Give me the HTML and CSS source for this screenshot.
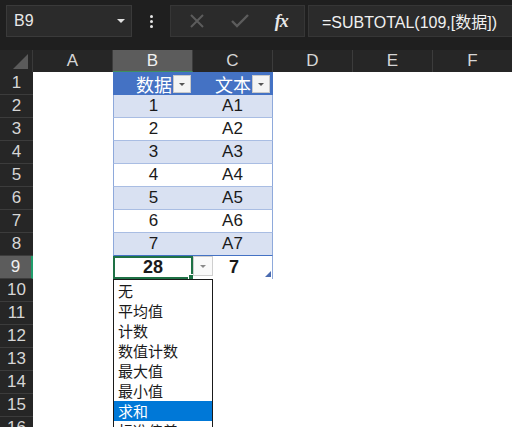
FILE: index.html
```html
<!DOCTYPE html>
<html>
<head>
<meta charset="utf-8">
<link rel="stylesheet" href="styles.css">
</head>
<body>
<div class="toolbar">
  <div class="namebox"><span class="nb-text">B9</span><span class="nb-arrow"></span></div>
  <div class="dots"><i></i><i></i><i></i></div>
  <div class="fxbox">
    <svg class="ic" width="16" height="16" viewBox="0 0 16 16"><path d="M2 2L14 14M14 2L2 14" stroke="#5c5c5c" stroke-width="2" fill="none"/></svg>
    <svg class="ic" width="20" height="16" viewBox="0 0 20 16"><path d="M2 8L7 13L18 2" stroke="#5c5c5c" stroke-width="2.4" fill="none"/></svg>
    <span class="fx">fx</span>
  </div>
  <div class="formula">=SUBTOTAL(109,[数据])</div>
</div>
<div class="sheet">
  <div class="corner"><span class="tri"></span></div>
  <div class="ch">A</div><div class="ch sel">B</div><div class="ch">C</div><div class="ch">D</div><div class="ch">E</div><div class="ch">F</div>

  <div class="rh">1</div><div class="c"></div>
  <div class="c hd tb"><span>数据</span><span class="fb"></span></div>
  <div class="c hd tc"><span>文本</span><span class="fb"></span></div>
  <div class="c"></div><div class="c"></div><div class="c"></div>

  <div class="rh">2</div><div class="c"></div><div class="c bl tb">1</div><div class="c bl tc">A1</div><div class="c"></div><div class="c"></div><div class="c"></div>
  <div class="rh">3</div><div class="c"></div><div class="c wh tb">2</div><div class="c wh tc">A2</div><div class="c"></div><div class="c"></div><div class="c"></div>
  <div class="rh">4</div><div class="c"></div><div class="c bl tb">3</div><div class="c bl tc">A3</div><div class="c"></div><div class="c"></div><div class="c"></div>
  <div class="rh">5</div><div class="c"></div><div class="c wh tb">4</div><div class="c wh tc">A4</div><div class="c"></div><div class="c"></div><div class="c"></div>
  <div class="rh">6</div><div class="c"></div><div class="c bl tb">5</div><div class="c bl tc">A5</div><div class="c"></div><div class="c"></div><div class="c"></div>
  <div class="rh">7</div><div class="c"></div><div class="c wh tb">6</div><div class="c wh tc">A6</div><div class="c"></div><div class="c"></div><div class="c"></div>
  <div class="rh">8</div><div class="c"></div><div class="c bl tb last">7</div><div class="c bl tc last">A7</div><div class="c"></div><div class="c"></div><div class="c"></div>

  <div class="rh rsel">9</div><div class="c"></div>
  <div class="c tot tb active">28<span class="handle"></span></div>
  <div class="c tot tc"><span class="ddbtn"></span><span class="tv">7</span><span class="resize"></span></div>
  <div class="c"></div><div class="c"></div><div class="c"></div>

  <div class="rh">10</div><div class="c"></div><div class="c"></div><div class="c"></div><div class="c"></div><div class="c"></div><div class="c"></div>
  <div class="rh">11</div><div class="c"></div><div class="c"></div><div class="c"></div><div class="c"></div><div class="c"></div><div class="c"></div>
  <div class="rh">12</div><div class="c"></div><div class="c"></div><div class="c"></div><div class="c"></div><div class="c"></div><div class="c"></div>
  <div class="rh">13</div><div class="c"></div><div class="c"></div><div class="c"></div><div class="c"></div><div class="c"></div><div class="c"></div>
  <div class="rh">14</div><div class="c"></div><div class="c"></div><div class="c"></div><div class="c"></div><div class="c"></div><div class="c"></div>
  <div class="rh">15</div><div class="c"></div><div class="c"></div><div class="c"></div><div class="c"></div><div class="c"></div><div class="c"></div>
  <div class="rh">16</div><div class="c"></div><div class="c"></div><div class="c"></div><div class="c"></div><div class="c"></div><div class="c"></div>

  <div class="menu">
    <div class="mi">无</div>
    <div class="mi">平均值</div>
    <div class="mi">计数</div>
    <div class="mi">数值计数</div>
    <div class="mi">最大值</div>
    <div class="mi">最小值</div>
    <div class="mi on">求和</div>
    <div class="mi">标准偏差</div>
  </div>
</div>
</body>
</html>
```
FILE: styles.css
```css
html, body { margin: 0; padding: 0; }
body {
  width: 512px; height: 427px; overflow: hidden; background: #ffffff;
  font-family: "Liberation Sans", "Noto Sans CJK SC", sans-serif;
}
.toolbar {
  height: 50px; background: #1f1f1f; display: flex; align-items: flex-start;
  padding-top: 5px; box-sizing: border-box;
}
.namebox {
  margin-left: 6px; width: 126px; height: 32px; box-sizing: border-box;
  background: #2b2b2b; border: 1px solid #3a3a3a; display: flex; align-items: center;
  justify-content: space-between; padding: 0 6px 0 7px;
}
.nb-text { color: #e8e8e8; font-size: 16px; }
.nb-arrow {
  width: 0; height: 0; border-left: 4px solid transparent; border-right: 4px solid transparent;
  border-top: 4px solid #e0e0e0;
}
.dots {
  width: 38px; height: 32px; display: flex; flex-direction: column; align-items: center;
  justify-content: center; gap: 2px;
}
.dots i { display: block; width: 3px; height: 3px; background: #e6e6e6; border-radius: 50%; }
.fxbox {
  width: 135px; height: 32px; box-sizing: border-box; background: #2b2b2b; border: 1px solid #363636;
  display: flex; align-items: center; justify-content: space-around; padding: 0 4px 0 6px;
}
.fx {
  font-family: "Liberation Serif", serif; font-style: italic; font-weight: bold;
  color: #e8e8e8; font-size: 18px; letter-spacing: -1px;
}
.formula {
  margin-left: 3px; flex: 1; height: 32px; box-sizing: border-box; background: #2b2b2b;
  border: 1px solid #363636; border-right: none; color: #f0f0f0; font-size: 16px;
  display: flex; align-items: center; padding-left: 13px; white-space: nowrap;
}
.sheet {
  position: relative; display: grid;
  grid-template-columns: 33px repeat(6, 80px);
  grid-template-rows: 22px repeat(16, 23px);
  width: 513px;
}
.corner { background: #262626; position: relative; border-right: 1px solid #3a3a3a; box-sizing: border-box; }
.tri {
  position: absolute; right: 4px; bottom: 3px; width: 0; height: 0;
  border-left: 15px solid transparent; border-bottom: 15px solid #5a5a5a;
}
.ch {
  background: #262626; color: #d6d6d6; font-size: 17px; display: flex; align-items: center;
  justify-content: center; border-right: 1px solid #3c3c3c; box-sizing: border-box;
}
.ch.sel { background: #5c5c5c; color: #f0f0f0; border-bottom: 1px solid #3f8f5f; }
.rh {
  background: #262626; color: #d6d6d6; font-size: 17px; display: flex; align-items: center;
  justify-content: center; border-bottom: 1px solid #3c3c3c; box-sizing: border-box;
}
.rh.rsel { background: #5c5c5c; color: #f0f0f0; border-right: 2px solid #1f9d6b; }
.c {
  background: #ffffff; color: #1a1a1a; font-size: 17px; display: flex; align-items: center;
  justify-content: center; box-sizing: border-box; position: relative;
}
.tb { border-left: 1px solid #8ea9db; }
.tc { border-right: 1px solid #8ea9db; }
.bl { background: #d9e1f2; border-bottom: 1px solid #a9bde3; }
.wh { background: #ffffff; border-bottom: 1px solid #a9bde3; }
.last { border-bottom: 1px solid #4472c4; }
.hd {
  background: #4472c4; color: #ffffff; justify-content: flex-end; padding-right: 2px;
  border-left-color: #4472c4; border-right-color: #4472c4; font-size: 18px;
}
.fb {
  width: 18px; height: 18px; box-sizing: border-box; background: #f4f4f4; border: 1px solid #c9c9c9;
  margin-left: 1px; position: relative;
}
.fb::after {
  content: ""; position: absolute; left: 5px; top: 7px; width: 0; height: 0;
  border-left: 3px solid transparent; border-right: 3px solid transparent; border-top: 3px solid #555;
}
.tot { font-weight: bold; font-size: 18px; }
.active { border: 2px solid #1e7145; }
.handle {
  position: absolute; right: -4px; bottom: -4px; width: 5px; height: 5px; background: #1e7145;
  border: 1px solid #fff;
}
.tot.tc { justify-content: flex-start; }
.ddbtn {
  width: 20px; height: 20px; box-sizing: border-box; border: 1px solid #cfcfcf; background: #fafafa;
  position: relative; align-self: flex-start; margin-top: 0;
}
.ddbtn::after {
  content: ""; position: absolute; left: 6px; top: 8px; width: 0; height: 0;
  border-left: 3px solid transparent; border-right: 3px solid transparent; border-top: 3px solid #8a8a8a;
}
.tv { margin-left: 16px; }
.resize {
  position: absolute; right: 1px; bottom: 2px; width: 0; height: 0;
  border-left: 6px solid transparent; border-bottom: 6px solid #4a6bb0;
}
.menu {
  position: absolute; left: 113px; top: 229px; width: 100px; height: 220px; box-sizing: border-box;
  background: #ffffff; border: 1px solid #1a1a1a; padding-top: 1px; z-index: 2;
}
.mi {
  height: 20px; line-height: 20px; font-size: 15px; color: #1a1a1a; padding-left: 4px;
  font-family: "Noto Sans CJK SC", sans-serif;
}
.mi.on { background: #0078d7; color: #ffffff; }
```
